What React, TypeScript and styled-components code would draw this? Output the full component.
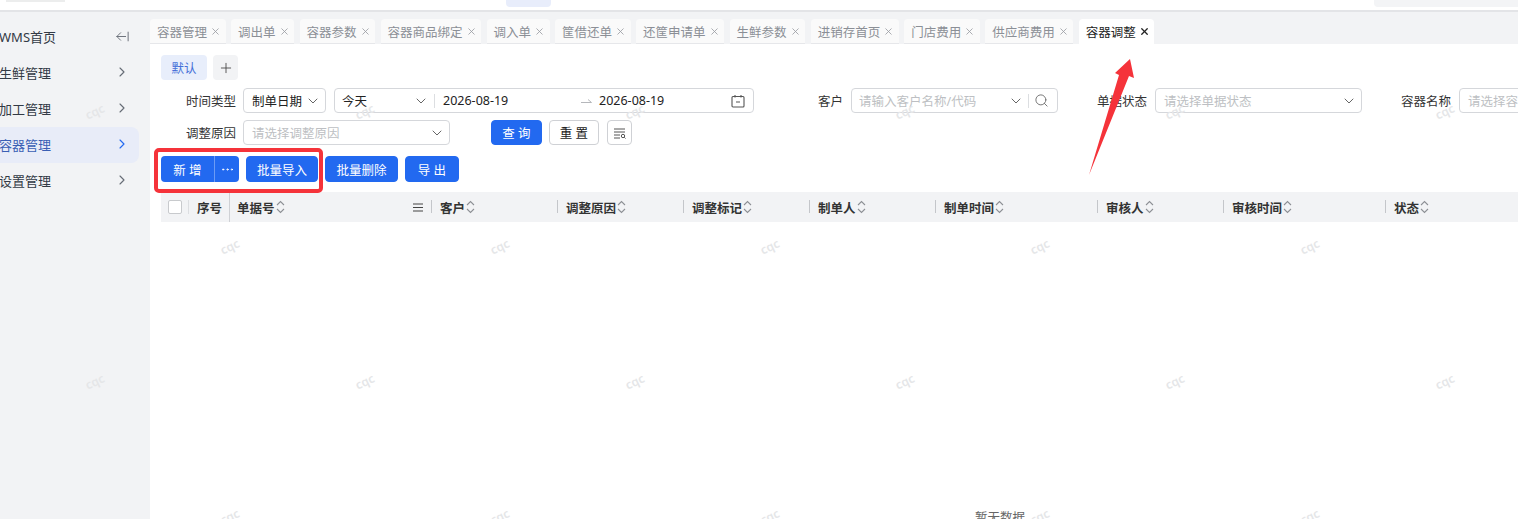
import { ArrowLeftFromLine, ChevronDown, ChevronRight, Ellipsis, Plus, Search, X } from 'lucide-react';
import styled, { createGlobalStyle } from 'styled-components';

const GlobalStyle = createGlobalStyle`
  html, body {
    margin: 0;
    padding: 0;
    height: 100%;
    overflow: hidden;
    background: #fff;
    font-family: 'Noto Sans', 'Noto Sans CJK SC', sans-serif;
  }
  * { box-sizing: border-box; }
`;

const Page = styled.div`
  position: relative;
  width: 1518px;
  height: 519px;
  overflow: hidden;
  display: flex;
  flex-direction: column;
`;

const TopBar = styled.header`
  flex: none;
  height: 12px;
  background: #fff;
  border-bottom: 2px solid #e3e4e7;
  display: flex;
  align-items: flex-start;
  padding-left: 6px;
`;

const TopLogo = styled.span`
  width: 59px;
  height: 2px;
  background: #eceded;
`;

const TopTab = styled.span`
  width: 45px;
  height: 7px;
  margin-left: 441px;
  background: #e8edfb;
  border-radius: 0 0 4px 4px;
`;

const TopSearch = styled.span`
  width: 144px;
  height: 7px;
  margin-left: auto;
  background: #f3f4f6;
  border-radius: 0 0 0 4px;
`;

const Body = styled.div`
  flex: 1;
  display: flex;
  min-height: 0;
`;

const Sidebar = styled.aside`
  flex: none;
  width: 150px;
  background: #f2f3f5;
  padding: 7px 11px 0 0;
`;

const MenuItem = styled.div<{ $active?: boolean }>`
  height: 36px;
  display: flex;
  align-items: center;
  justify-content: space-between;
  padding: 0 9px 2px 0;
  font-size: 13px;
  color: ${(p) => (p.$active ? '#3a5fb4' : '#333a45')};
  background: ${(p) => (p.$active ? '#e8ecf8' : 'transparent')};
  border-radius: 0 8px 8px 0;

  svg {
    color: ${(p) => (p.$active ? '#2269f0' : '#666c75')};
  }
`;

const MenuLabel = styled.span`
  margin-left: -1px;
`;

const Main = styled.main`
  flex: 1;
  min-width: 0;
  display: flex;
  flex-direction: column;
  background: #f2f3f5;
`;

const TabBar = styled.nav`
  flex: none;
  height: 32px;
  padding-top: 7px;
  display: flex;
  gap: 5.5px;
`;

const Tab = styled.div<{ $active?: boolean }>`
  height: 25px;
  padding: 0 4.5px 0 7px;
  display: flex;
  align-items: center;
  gap: 3px;
  font-size: 12.5px;
  white-space: nowrap;
  border-radius: 4px 4px 0 0;
  color: ${(p) => (p.$active ? '#222' : '#8b8f96')};
  background: ${(p) => (p.$active ? '#fff' : '#fafafa')};
  border-bottom: 1px solid ${(p) => (p.$active ? '#fff' : '#e6e7ea')};

  svg {
    color: ${(p) => (p.$active ? '#222' : '#9a9da3')};
  }
`;

const Content = styled.section`
  flex: 1;
  background: #fff;
  padding: 11px 0 0 11px;
  min-height: 0;
`;

const ViewRow = styled.div`
  display: flex;
  gap: 6px;
  height: 25px;
`;

const ViewChip = styled.div`
  width: 46px;
  display: flex;
  align-items: center;
  justify-content: center;
  font-size: 12.5px;
  color: #4670d8;
  background: #e8eefb;
  border-radius: 4px;
`;

const ViewAdd = styled.div`
  width: 25px;
  display: flex;
  align-items: center;
  justify-content: center;
  color: #444;
  background: #f2f3f5;
  border-radius: 4px;
`;

const FilterRow = styled.div<{ $top: number }>`
  display: flex;
  align-items: center;
  margin-top: ${(p) => p.$top}px;
  height: 25px;
  white-space: nowrap;
`;

const FieldLabel = styled.label<{ $width: number }>`
  flex: none;
  width: ${(p) => p.$width}px;
  margin-right: ${(p) => (p.$width === 75 ? 7 : 8)}px;
  padding-bottom: 1px;
  text-align: right;
  font-size: 12.5px;
  color: #333;
`;

const Control = styled.div<{ $width: number; $left?: number }>`
  flex: none;
  width: ${(p) => p.$width}px;
  margin-left: ${(p) => p.$left ?? 0}px;
  height: 25px;
  padding: 0 8px;
  display: flex;
  align-items: center;
  font-size: 12.5px;
  color: #222;
  background: #fff;
  border: 1px solid #d5d7db;
  border-radius: 4px;

  svg {
    flex: none;
    color: #666;
  }
`;

const Placeholder = styled.span<{ $shift?: boolean }>`
  flex: 1;
  margin-left: ${(p) => (p.$shift ? -1 : 0)}px;
  color: #bdbfc3;
`;

const ValueText = styled.span<{ $width?: number; $left?: number }>`
  flex: ${(p) => (p.$width ? 'none' : 1)};
  width: ${(p) => (p.$width ? `${p.$width}px` : 'auto')};
  margin-left: ${(p) => p.$left ?? 0}px;
`;

const SelectChevron = styled(ChevronDown)`
  margin-right: -4px;
`;

const Split = styled.span<{ $gap: number }>`
  flex: none;
  width: 1px;
  height: 14px;
  background: #dcdee1;
  margin: 0 ${(p) => p.$gap}px;
`;

const RangeArrow = styled.svg`
  flex: none;
  margin-right: 7px;
`;

const SearchIcon = styled(Search)`
  margin-left: 1px;
`;

const Button = styled.button<{ $width: number; $left?: number; $ghost?: boolean }>`
  flex: none;
  width: ${(p) => p.$width}px;
  margin-left: ${(p) => p.$left ?? 0}px;
  height: 25px;
  padding: 0;
  display: inline-flex;
  align-items: center;
  justify-content: center;
  font: inherit;
  font-size: 12.5px;
  color: ${(p) => (p.$ghost ? '#222' : '#fff')};
  background: ${(p) => (p.$ghost ? '#fff' : '#2269f0')};
  border: 1px solid ${(p) => (p.$ghost ? '#cfd1d5' : '#2269f0')};
  border-radius: 4px;
`;

const ActionRow = styled.div`
  display: flex;
  gap: 7px;
  margin-top: 11px;
  height: 26px;
`;

const SplitButton = styled.div`
  width: 78px;
  display: flex;
  color: #fff;
  background: #2269f0;
  border-radius: 4px;
  font-size: 12.5px;
`;

const SplitMain = styled.span`
  width: 54px;
  display: flex;
  align-items: center;
  justify-content: center;
  border-right: 1px solid #6c9bf5;
`;

const SplitMore = styled.span`
  flex: 1;
  display: flex;
  align-items: center;
  justify-content: center;
`;

const ActionButton = styled(Button)`
  height: 26px;
`;

const TableHead = styled.div`
  display: flex;
  height: 30px;
  margin-top: 10px;
  background: #f2f3f5;
  white-space: nowrap;
`;

const CheckCell = styled.div`
  flex: none;
  width: 69px;
  padding-left: 7px;
  display: flex;
  align-items: center;
  border-right: 1px solid #cfd1d5;
  font-size: 12.5px;
  font-weight: 600;
  color: #333;
`;

const CheckBox = styled.span`
  width: 14px;
  height: 14px;
  background: #fff;
  border: 1px solid #c8cacd;
  border-radius: 2px;
`;

const SeqLabel = styled.span`
  margin-left: 2px;
`;

const HeadCell = styled.div<{ $width: number; $divider?: boolean }>`
  position: relative;
  flex: none;
  width: ${(p) => p.$width}px;
  padding-left: ${(p) => (p.$divider ? 9 : 7)}px;
  display: flex;
  align-items: center;
  font-size: 12.5px;
  font-weight: 600;
  color: #333;

  &::before {
    content: '';
    display: ${(p) => (p.$divider ? 'block' : 'none')};
    position: absolute;
    left: 0;
    top: 8px;
    width: 1px;
    height: 13px;
    background: #c4c6ca;
  }
`;

const SortSvg = styled.svg`
  margin-left: 1px;
`;

const MenuIcon = styled.svg`
  margin-left: auto;
  margin-right: 8px;
`;

const EmptyText = styled.div`
  margin: 287px 0 0 814px;
  font-size: 12.5px;
  color: #666;
  line-height: 18px;
  white-space: nowrap;
`;

const Watermark = styled.span`
  position: absolute;
  font-size: 12px;
  font-weight: 600;
  line-height: 1;
  color: #e5e6e8;
  transform: translate(-50%, -50%) rotate(-25deg);
  pointer-events: none;
`;

const RedFrame = styled.div`
  position: absolute;
  left: 154px;
  top: 148px;
  width: 169px;
  height: 45px;
  border: 4px solid #f5333a;
  border-radius: 5px;
  pointer-events: none;
`;

const Arrow = styled.svg`
  position: absolute;
  left: 1085px;
  top: 55px;
  pointer-events: none;
`;

const SortIcon = () => (
  <SortSvg width="9" height="14" viewBox="0 0 9 14" fill="none" stroke="#8d9095" strokeWidth="1.1">
    <path d="M1 5l3.5-3.5L8 5M1 9l3.5 3.5L8 9" />
  </SortSvg>
);

const CalendarIcon = () => (
  <svg width="14" height="14" viewBox="0 0 14 14" fill="none" stroke="#555" strokeWidth="1.1">
    <rect x="1" y="2.5" width="12" height="10.5" rx="1" />
    <path d="M4 1v2.5M10 1v2.5M5 8h4" />
  </svg>
);

const ColumnSetIcon = () => (
  <svg width="13" height="12" viewBox="0 0 13 12" fill="none" stroke="#555" strokeWidth="1">
    <path d="M1 2h11M1 5h11M1 8h6M1 11h6" />
    <circle cx="10" cy="9" r="1.7" />
    <path d="M11.3 10.3l1.2 1.2" />
  </svg>
);

const tabs = ['容器管理', '调出单', '容器参数', '容器商品绑定', '调入单', '筐借还单', '还筐申请单', '生鲜参数', '进销存首页', '门店费用', '供应商费用'];
const menus = ['生鲜管理', '加工管理', '容器管理', '设置管理'];
const columns: [string, number][] = [
  ['客户', 126],
  ['调整原因', 126],
  ['调整标记', 126],
  ['制单人', 126],
  ['制单时间', 162],
  ['审核人', 126],
  ['审核时间', 162],
  ['状态', 133],
];

// the cqc stamps repeat on a staggered 135 x 135 grid
const marks = Array.from({ length: 11 }, (_, i) => i).flatMap((i) =>
  (i % 2 === 0 ? [112, 382] : [247, 517]).map((y) => ({ x: 95 + i * 135, y }))
);

export default function App() {
  return (
    <Page>
      <GlobalStyle />
      <TopBar>
        <TopLogo />
        <TopTab />
        <TopSearch />
      </TopBar>
      <Body>
        <Sidebar>
          <MenuItem>
            <MenuLabel>WMS首页</MenuLabel>
            <ArrowLeftFromLine size={15} strokeWidth={1.5} />
          </MenuItem>
          {menus.map((m) => (
            <MenuItem key={m} $active={m === '容器管理'}>
              <MenuLabel>{m}</MenuLabel>
              <ChevronRight size={16} strokeWidth={1.7} />
            </MenuItem>
          ))}
        </Sidebar>
        <Main>
          <TabBar>
            {tabs.map((t) => (
              <Tab key={t}>
                {t}
                <X size={11} strokeWidth={1.8} />
              </Tab>
            ))}
            <Tab $active>
              容器调整
              <X size={11} strokeWidth={2.8} />
            </Tab>
          </TabBar>
          <Content>
            <ViewRow>
              <ViewChip>默认</ViewChip>
              <ViewAdd>
                <Plus size={16} strokeWidth={1.3} />
              </ViewAdd>
            </ViewRow>
            <FilterRow $top={8}>
              <FieldLabel $width={75}>时间类型</FieldLabel>
              <Control $width={83}>
                <ValueText>制单日期</ValueText>
                <SelectChevron size={16} strokeWidth={1.5} />
              </Control>
              <Control $width={420} $left={8}>
                <ValueText $width={71} $left={-1}>今天</ValueText>
                <ChevronDown size={16} strokeWidth={1.5} />
                <Split $gap={5} />
                <ValueText $width={138} $left={3}>2026-08-19</ValueText>
                <RangeArrow width="11" height="6" viewBox="0 0 11 6" fill="none" stroke="#b5b7bb" strokeWidth="1">
                  <path d="M0 4.500h10.500M7 1.500l3.500 3" />
                </RangeArrow>
                <ValueText>2026-08-19</ValueText>
                <CalendarIcon />
              </Control>
              <FieldLabel $width={89}>客户</FieldLabel>
              <Control $width={207}>
                <Placeholder $shift>请输入客户名称/代码</Placeholder>
                <ChevronDown size={16} strokeWidth={1.5} />
                <Split $gap={4} />
                <SearchIcon size={15} strokeWidth={1.4} />
              </Control>
              <FieldLabel $width={89}>单据状态</FieldLabel>
              <Control $width={207}>
                <Placeholder>请选择单据状态</Placeholder>
                <SelectChevron size={16} strokeWidth={1.5} />
              </Control>
              <FieldLabel $width={89}>容器名称</FieldLabel>
              <Control $width={207}>
                <Placeholder>请选择容器名称</Placeholder>
              </Control>
            </FilterRow>
            <FilterRow $top={7}>
              <FieldLabel $width={75}>调整原因</FieldLabel>
              <Control $width={207}>
                <Placeholder>请选择调整原因</Placeholder>
                <SelectChevron size={16} strokeWidth={1.5} />
              </Control>
              <Button $width={51} $left={41}>查 询</Button>
              <Button $width={50} $left={7} $ghost>重 置</Button>
              <Button $width={25} $left={8} $ghost>
                <ColumnSetIcon />
              </Button>
            </FilterRow>
            <ActionRow>
              <SplitButton>
                <SplitMain>新 增</SplitMain>
                <SplitMore>
                  <Ellipsis size={15} strokeWidth={1.5} />
                </SplitMore>
              </SplitButton>
              <ActionButton $width={72}>批量导入</ActionButton>
              <ActionButton $width={73}>批量删除</ActionButton>
              <ActionButton $width={54}>导 出</ActionButton>
            </ActionRow>
            <TableHead>
              <CheckCell>
                <CheckBox />
                <Split $gap={6} />
                <SeqLabel>序号</SeqLabel>
              </CheckCell>
              <HeadCell $width={201}>
                单据号
                <SortIcon />
                <MenuIcon width="10" height="9" viewBox="0 0 10 9" stroke="#444" strokeWidth="1.1">
                  <path d="M0 1h10M0 4.500h10M0 8h10" />
                </MenuIcon>
              </HeadCell>
              {columns.map(([name, width]) => (
                <HeadCell key={name} $width={width} $divider>
                  {name}
                  <SortIcon />
                </HeadCell>
              ))}
            </TableHead>
            <EmptyText>暂无数据</EmptyText>
          </Content>
        </Main>
      </Body>
      {marks.map((m) => (
        <Watermark key={`${m.x}-${m.y}`} style={{ left: m.x, top: m.y }}>
          cqc
        </Watermark>
      ))}
      <RedFrame />
      <Arrow width="54" height="125" viewBox="0 0 54 125">
        <path d="M4 120L34 20L30 18L45 4L49 23L44 21Z" fill="#f5333a" />
      </Arrow>
    </Page>
  );
}
